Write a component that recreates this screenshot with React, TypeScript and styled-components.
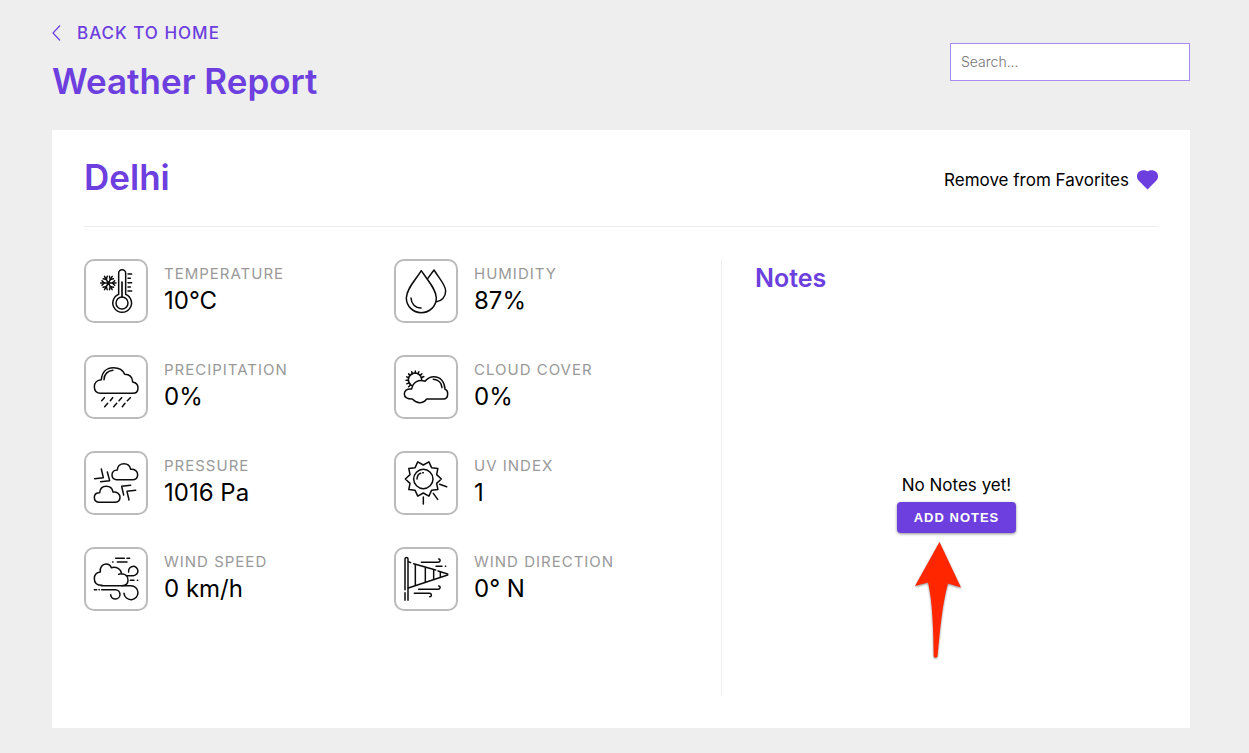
import React from "react";
import styled, { createGlobalStyle } from "styled-components";

const purple = "#6c3fde";

const GlobalStyle = createGlobalStyle`
  *, *::before, *::after { box-sizing: border-box; }
  body {
    margin: 0;
    background: #eeeeee;
    color: #000;
    font-family: Inter, "Open Sans", sans-serif;
    font-size: 17px;
    line-height: 24px;
  }
  h1, h2, h3, p, dl, dt, dd { margin: 0; }
`;

const Page = styled.div`
  padding: 21px 59px 25px 52px;
`;

const TopBar = styled.header`
  display: flex;
  justify-content: space-between;
  align-items: center;
  margin-bottom: 28px;
`;

const BackLink = styled.a`
  display: inline-flex;
  align-items: center;
  gap: 16px;
  color: ${purple};
  font-size: 17px;
  font-weight: 500;
  letter-spacing: 1px;
  text-transform: uppercase;
  text-decoration: none;
`;

const PageTitle = styled.h1`
  margin-top: 13px;
  color: ${purple};
  font-size: 35px;
  font-weight: 600;
  line-height: 42px;
`;

const SearchInput = styled.input`
  width: 240px;
  height: 38px;
  padding: 0 10px;
  border: 1px solid #a78bf0;
  border-radius: 0;
  background: #fff;
  font-family: inherit;
  font-size: 14px;
  font-weight: 300;
  &::placeholder { color: #757575; opacity: 1; }
`;

const Card = styled.main`
  padding: 23px 32px 32px;
  background: #fff;
`;

const CardHeader = styled.div`
  display: flex;
  justify-content: space-between;
  align-items: center;
  padding-bottom: 25px;
  border-bottom: 1px solid #eeeeee;
`;

const City = styled.h2`
  color: ${purple};
  font-size: 35px;
  font-weight: 600;
  line-height: 48px;
`;

const FavoriteButton = styled.button`
  display: flex;
  align-items: center;
  gap: 8px;
  padding: 6px 0 0;
  border: 0;
  background: none;
  color: inherit;
  font: inherit;
  cursor: pointer;
`;

const Content = styled.div`
  display: grid;
  grid-template-columns: 620fr 437fr;
  column-gap: 17px;
  padding-top: 32px;
`;

const Metrics = styled.dl`
  display: grid;
  grid-template-columns: 1fr 1fr;
  gap: 32px 0;
  align-content: start;
`;

const Metric = styled.div`
  display: grid;
  grid-template-columns: 64px 1fr;
  grid-template-rows: 26px 32px;
  column-gap: 16px;
  height: 64px;
`;

const IconBox = styled.div`
  grid-row: 1 / 3;
  display: flex;
  align-items: center;
  justify-content: center;
  height: 64px;
  border: 2px solid #bbbbbb;
  border-radius: 10px;
`;

const IconSvg = styled.svg`
  width: 44px;
  height: 44px;
  overflow: visible;
  fill: none;
  stroke: #0c0c0c;
  stroke-width: 4.5px;
  stroke-linecap: round;
  stroke-linejoin: round;
`;

const Label = styled.dt`
  padding-top: 3px;
  color: #999999;
  font-size: 15px;
  letter-spacing: 1px;
  text-transform: uppercase;
`;

const Value = styled.dd`
  font-size: 24px;
  line-height: 32px;
`;

const Notes = styled.section`
  display: flex;
  flex-direction: column;
  min-height: 437px;
  padding-left: 33px;
  border-left: 1px solid #eeeeee;
`;

const NotesTitle = styled.h3`
  padding-top: 3px;
  color: ${purple};
  font-size: 25px;
  font-weight: 600;
  line-height: 32px;
`;

const EmptyState = styled.div`
  flex: 1;
  display: flex;
  flex-direction: column;
  align-items: center;
  justify-content: center;
  gap: 5px;
  padding-top: 15px;
`;

const EmptyText = styled.p`
  font-size: 17px;
`;

const ButtonAnchor = styled.div`
  position: relative;
`;

const AddButton = styled.button`
  display: block;
  height: 31px;
  padding: 0 17px;
  border: 0;
  border-radius: 4px;
  background: ${purple};
  box-shadow: 0 1px 3px rgba(0, 0, 0, 0.45);
  color: #fff;
  font-family: "Liberation Sans", Arial, sans-serif;
  font-size: 13px;
  font-weight: 700;
  letter-spacing: 1px;
  text-transform: uppercase;
  cursor: pointer;
`;

const Pointer = styled.svg`
  position: absolute;
  top: 37px;
  left: 13px;
  width: 60px;
  height: 126px;
  filter: drop-shadow(0 1px 1px rgba(0, 0, 0, 0.45));
  pointer-events: none;
`;

function Glyph({ children }: { children: React.ReactNode }) {
  return (
    <IconSvg viewBox="54 51 132 132" aria-hidden="true">
      {children}
    </IconSvg>
  );
}

const spokes = (cx: number, cy: number, from: number, to: number, angles: number[]) =>
  angles
    .map((a) => {
      const r = (a * Math.PI) / 180;
      const c = Math.cos(r);
      const s = Math.sin(r);
      return `M${cx + from * c} ${cy + from * s}L${cx + to * c} ${cy + to * s}`;
    })
    .join("");

const starPoints = Array.from({ length: 20 }, (_, i) => {
  const r = i % 2 === 0 ? 54 : 42;
  const a = (i * Math.PI) / 10;
  return `${112 + r * Math.cos(a)},${105 + r * Math.sin(a)}`;
}).join(" ");

const TemperatureIcon = () => (
  <Glyph>
    <path d="M128 127V64a10.500 10.500 0 0 1 21 0V127A28 28 0 1 1 128 127Z" />
    <circle cx="138" cy="153" r="18" />
    <path d="M138 90V134" strokeWidth="5" />
    <path d="M156 66H167M156 79H163M156 92H167M156 105H163M156 117H167" />
    <path d={spokes(97, 93, 0, 23, [0, 60, 120, 180, 240, 300])} />
    <g>
      {[0, 60, 120, 180, 240, 300].map((a) => (
        <path key={a} d="M116 86L109 93L116 100" transform={`rotate(${a} 97 93)`} />
      ))}
    </g>
  </Glyph>
);

const HumidityIcon = () => (
  <Glyph>
    <path d="M106 56C90 82 61 110 61 138A45 44 0 0 0 151 138C151 110 122 82 106 56Z" />
    <path d="M125 80L144 54C160 80 179 98 179 117C179 135 166 148 151 149" />
    <path d="M75 138C76 156 88 168 105 168" />
  </Glyph>
);

const PrecipitationIcon = () => (
  <Glyph>
    <path d="M74 136C61 135 55 127 55 116C55 104 64 96 76 95C78 72 92 59 112 59C130 59 142 68 146 79C160 79 169 88 170 102C180 104 186 110 186 119C186 129 180 136 170 136Z" />
    <path d="M84 95C84 79 95 68 111 67" />
    <path d="M85 149L77 158M110 149L103 158M137 149L129 158M163 149L154 158M95 166L86 176M122 166L113 176M147 166L139 176" />
  </Glyph>
);

const CloudCoverIcon = () => (
  <Glyph>
    <path d="M76 112A20 20 0 1 1 107 94" />
    <path d={spokes(88, 97, 21, 28, [136, 158, 180, 202, 224, 247, 270, 292, 315, 336])} />
    <path d="M77 123C62 121 55 129 55 138C55 148 63 153 79 153C86 160 93 164 101 164C110 164 117 160 122 153H172C182 153 185 146 185 138C185 130 181 125 177 124C176 101 163 86 144 86C132 86 124 91 117 100C99 92 80 103 77 123Z" />
    <path d="M142 94C157 95 167 105 168 119" />
  </Glyph>
);

const PressureIcon = () => (
  <Glyph>
    <path d="M121 107C112 106 108 100 108 93C108 84 115 78 124 78C124 66 133 59 144 59C155 59 162 66 164 76C177 75 185 82 185 92C185 101 179 107 169 107Z" />
    <path d="M68 175C59 174 55 168 55 160C55 151 62 146 71 146C72 134 80 127 91 127C102 127 109 134 111 144C124 143 132 150 132 160C132 169 126 175 116 175Z" />
    <path d="M56 104L82 101L76 75M74 113L101 110L94 84M164 124L137 127L143 153M179 139L153 142L159 168" />
  </Glyph>
);

const UvIcon = () => (
  <Glyph>
    <polygon points={starPoints} />
    <circle cx="112" cy="105" r="29" />
    <path d="M93 105C94 96 99 89 104 88M110 86H112M161 121L182 128M142 148L155 166M112 159V180" />
  </Glyph>
);

const WindSpeedIcon = () => (
  <Glyph>
    <path d="M78 136C62 136 55 127 55 116C55 105 62 97 73 96C71 82 79 72 90 72C98 72 103 76 106 83C121 79 135 87 137 102C148 101 157 109 156 121C156 130 150 137 138 137M128 103C132 101 134 101 138 102" />
    <path d="M76 137H164A21 21 0 1 1 144 160" />
    <path d="M158 96A14 14 0 1 1 172 107H151" />
    <path d="M77 149H118A14 14 0 1 1 104 164M55 149H62M69 149H70" />
    <path d="M119 55H145M153 55H161M110 66H111M124 66H153M163 121H174M184 121H185" />
  </Glyph>
);

const WindDirectionIcon = () => (
  <Glyph>
    <path d="M57 181V158M57 149V57C57 51 66 51 66 57V181" />
    <path d="M67 65L74 68M83 71L149 90M156 93L185 102V105L67 144" />
    <path d="M88 74V136M118 83V126M143 90V118M163 97V111" />
    <path d="M106 67H156C164 67 164 57 158 57M150 79H168M178 79H179" />
    <path d="M98 148H156C164 148 164 138 158 138M85 160H130C138 160 138 170 131 170" />
  </Glyph>
);

const metrics = [
  { label: "Temperature", value: "10°C", Icon: TemperatureIcon },
  { label: "Humidity", value: "87%", Icon: HumidityIcon },
  { label: "Precipitation", value: "0%", Icon: PrecipitationIcon },
  { label: "Cloud Cover", value: "0%", Icon: CloudCoverIcon },
  { label: "Pressure", value: "1016 Pa", Icon: PressureIcon },
  { label: "UV Index", value: "1", Icon: UvIcon },
  { label: "Wind Speed", value: "0 km/h", Icon: WindSpeedIcon },
  { label: "Wind Direction", value: "0° N", Icon: WindDirectionIcon },
];

export default function App() {
  return (
    <>
      <GlobalStyle />
      <Page>
        <TopBar>
          <div>
            <BackLink href="#home">
              <svg width="9" height="16" viewBox="0 0 9 16" fill="none" stroke={purple} strokeWidth="1.2" aria-hidden="true">
                <path d="M8 0.500L1 8L8 15.500" />
              </svg>
              Back to Home
            </BackLink>
            <PageTitle>Weather Report</PageTitle>
          </div>
          <SearchInput type="search" placeholder="Search..." aria-label="Search" />
        </TopBar>
        <Card>
          <CardHeader>
            <City>Delhi</City>
            <FavoriteButton type="button">
              Remove from Favorites
              <svg width="21" height="20" viewBox="0 0 21 20" fill={purple} aria-hidden="true">
                <path d="M10.500 19.500L1.800 10.800C-0.600 8.300-0.600 4.300 1.700 2C4.200-0.400 8.200-0.200 10.500 1.300C12.800-0.200 16.800-0.400 19.300 2C21.600 4.300 21.600 8.300 19.200 10.800Z" />
              </svg>
            </FavoriteButton>
          </CardHeader>
          <Content>
            <Metrics>
              {metrics.map(({ label, value, Icon }) => (
                <Metric key={label}>
                  <IconBox>
                    <Icon />
                  </IconBox>
                  <Label>{label}</Label>
                  <Value>{value}</Value>
                </Metric>
              ))}
            </Metrics>
            <Notes>
              <NotesTitle>Notes</NotesTitle>
              <EmptyState>
                <EmptyText>No Notes yet!</EmptyText>
                <ButtonAnchor>
                  <AddButton type="button">Add Notes</AddButton>
                  <Pointer viewBox="0 0 60 126" aria-hidden="true">
                    <path
                      d="M29.500 3L51 48.500L38 44.500C32 66 30 92 27.500 117.500Q25.500 120 23.700 117.500C23.500 92 22.500 62 18 43.500L5 47Z"
                      fill="#ff2600"
                    />
                  </Pointer>
                </ButtonAnchor>
              </EmptyState>
            </Notes>
          </Content>
        </Card>
      </Page>
    </>
  );
}
